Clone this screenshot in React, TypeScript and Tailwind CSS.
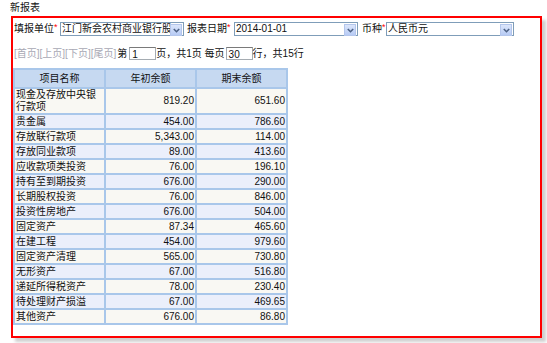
import React from "react";

const rows: [string, string, string][] = [
  ["现金及存放中央银行款项", "819.20", "651.60"],
  ["贵金属", "454.00", "786.60"],
  ["存放联行款项", "5,343.00", "114.00"],
  ["存放同业款项", "89.00", "413.60"],
  ["应收款项类投资", "76.00", "196.10"],
  ["持有至到期投资", "676.00", "290.00"],
  ["长期股权投资", "76.00", "846.00"],
  ["投资性房地产", "676.00", "504.00"],
  ["固定资产", "87.34", "465.60"],
  ["在建工程", "454.00", "979.60"],
  ["固定资产清理", "565.00", "730.80"],
  ["无形资产", "67.00", "516.80"],
  ["递延所得税资产", "78.00", "230.40"],
  ["待处理财产损溢", "67.00", "469.65"],
  ["其他资产", "676.00", "86.80"],
];

function Arrow() {
  return (
    <span className="absolute right-[1px] top-[1px] w-[12px] h-[12px] bg-gradient-to-b from-[#dce6fb] to-[#b7cbf5] border border-[#b4c6ec] flex items-center justify-center">
      <svg width="7" height="5" viewBox="0 0 7 5">
        <path d="M0.8 1 L3.5 3.7 L6.2 1" fill="none" stroke="#4d6185" strokeWidth="1.6" />
      </svg>
    </span>
  );
}

function Select({ w, text }: { w: string; text: string }) {
  return (
    <div className={`relative h-[14px] border border-[#7f9db9] bg-white ${w}`}>
      <div className="pl-[1px] leading-[12px] whitespace-nowrap">{text}</div>
      <Arrow />
    </div>
  );
}

export default function App() {
  return (
    <div
      className="w-[547px] h-[343px] bg-white text-[10px] text-[#111] overflow-hidden"
      style={{ fontFamily: '"Liberation Sans", "Noto Sans CJK SC", sans-serif' }}
    >
      <div className="pl-[10px] pt-[2px] leading-[12px] h-[14px]">新报表</div>
      <div className="ml-[11px] mt-[2px] w-[531px] h-[322px] border-2 border-[#ff0000] shadow-[4px_4px_3px_#cfcfcf] bg-white">
        <div className="flex items-center pt-[4px] pl-[1px] h-[18px] leading-[12px]">
          <span>填报单位</span>
          <span className="text-[#ff0000] text-[9px] w-[6px] self-start mt-[-1px]">*</span>
          <Select w="w-[124px]" text="江门新会农村商业银行股" />
          <span className="ml-[3px]">报表日期</span>
          <span className="text-[#ff0000] text-[9px] w-[7px] self-start mt-[-1px]">*</span>
          <Select w="w-[124px]" text="2014-01-01" />
          <span className="ml-[4px]">币种</span>
          <span className="text-[#ff0000] text-[9px] w-[4px] self-start mt-[-1px]">*</span>
          <Select w="w-[128px]" text="人民币元" />
        </div>
        <div className="flex items-center mt-[11px] pl-[1px] h-[13px] leading-[12px]">
          <span className="text-[#a8a8b4]">[首页][上页][下页][尾页]</span>
          <span className="ml-[1px]">第</span>
          <span className="ml-[2px] w-[27px] h-[13px] border border-[#a5acb2] border-t-[#7a7a7a] leading-[12px] pl-[2px] pt-[1px] bg-white">1</span>
          <span>页，共1页 每页</span>
          <span className="ml-[1px] w-[27px] h-[13px] border border-[#a5acb2] border-t-[#7a7a7a] leading-[12px] pl-[2px] pt-[1px] bg-white">30</span>
          <span>行，共15行</span>
        </div>
        <table className="mt-[8px] border-separate border-spacing-[2px] bg-[#a9c7ea] leading-[12px]">
          <thead>
            <tr>
              <th className="w-[89px] h-[17px] bg-[#c6d9f1] font-normal text-center p-0">项目名称</th>
              <th className="w-[89px] h-[17px] bg-[#c6d9f1] font-normal text-center p-0">年初余额</th>
              <th className="w-[89px] h-[17px] bg-[#c6d9f1] font-normal text-center p-0">期末余额</th>
            </tr>
          </thead>
          <tbody>
            {rows.map((r, i) => {
              const bg = i % 2 === 0 ? "bg-[#f9f8f3]" : "bg-[#ebeffb]";
              return (
                <tr key={i}>
                  <td className={`${bg} h-[13px] p-0 pl-[1px] text-left`}>{r[0]}</td>
                  <td className={`${bg} h-[13px] p-0 pr-[1px] text-right`}>{r[1]}</td>
                  <td className={`${bg} h-[13px] p-0 pr-[1px] text-right`}>{r[2]}</td>
                </tr>
              );
            })}
          </tbody>
        </table>
      </div>
    </div>
  );
}
